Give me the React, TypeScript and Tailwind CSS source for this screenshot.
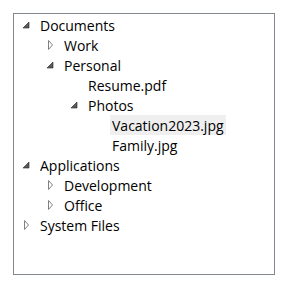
type Node = {
  label: string;
  children?: Node[];
  expanded?: boolean;
  selected?: boolean;
};

const tree: Node[] = [
  {
    label: 'Documents',
    expanded: true,
    children: [
      { label: 'Work', children: [{ label: 'x' }] },
      {
        label: 'Personal',
        expanded: true,
        children: [
          { label: 'Resume.pdf' },
          {
            label: 'Photos',
            expanded: true,
            children: [{ label: 'Vacation2023.jpg', selected: true }, { label: 'Family.jpg' }],
          },
        ],
      },
    ],
  },
  {
    label: 'Applications',
    expanded: true,
    children: [
      { label: 'Development', children: [{ label: 'x' }] },
      { label: 'Office', children: [{ label: 'x' }] },
    ],
  },
  { label: 'System Files', children: [{ label: 'x' }] },
];

function Toggle({ expanded }: { expanded: boolean }) {
  return (
    <svg width="16" height="16" viewBox="0 0 16 16" className="ml-[4px]">
      {expanded ? (
        <path d="M11 5 L11 11 L5 11 Z" fill="#595959" stroke="#262626" strokeWidth="0.6" />
      ) : (
        <path d="M6.5 3.5 L10.5 8 L6.5 12.5 Z" fill="#fff" stroke="#818181" strokeWidth="1" />
      )}
    </svg>
  );
}

function Item({ node, level }: { node: Node; level: number }) {
  const hasKids = !!node.children;
  return (
    <>
      <div className="flex h-5 items-center" style={{ paddingLeft: level * 24 }}>
        <div className="flex w-6 shrink-0 items-center">
          {hasKids && <Toggle expanded={!!node.expanded} />}
        </div>
        <span className={`h-5 px-[2px] pt-px leading-[19px] ${node.selected ? 'bg-[#efefef]' : ''}`}>
          {node.label}
        </span>
      </div>
      {hasKids && node.expanded && node.children!.map((c) => <Item key={c.label} node={c} level={level + 1} />)}
    </>
  );
}

export default function App() {
  return (
    <div className="h-[287px] w-[287px] bg-white p-[13px]">
      <div
        className="h-[262px] w-[262px] border border-[#828790] bg-white pt-px text-[14px] text-black"
        style={{ fontFamily: '"Open Sans", "Noto Sans", sans-serif' }}
      >
        {tree.map((n) => (
          <Item key={n.label} node={n} level={0} />
        ))}
      </div>
    </div>
  );
}
